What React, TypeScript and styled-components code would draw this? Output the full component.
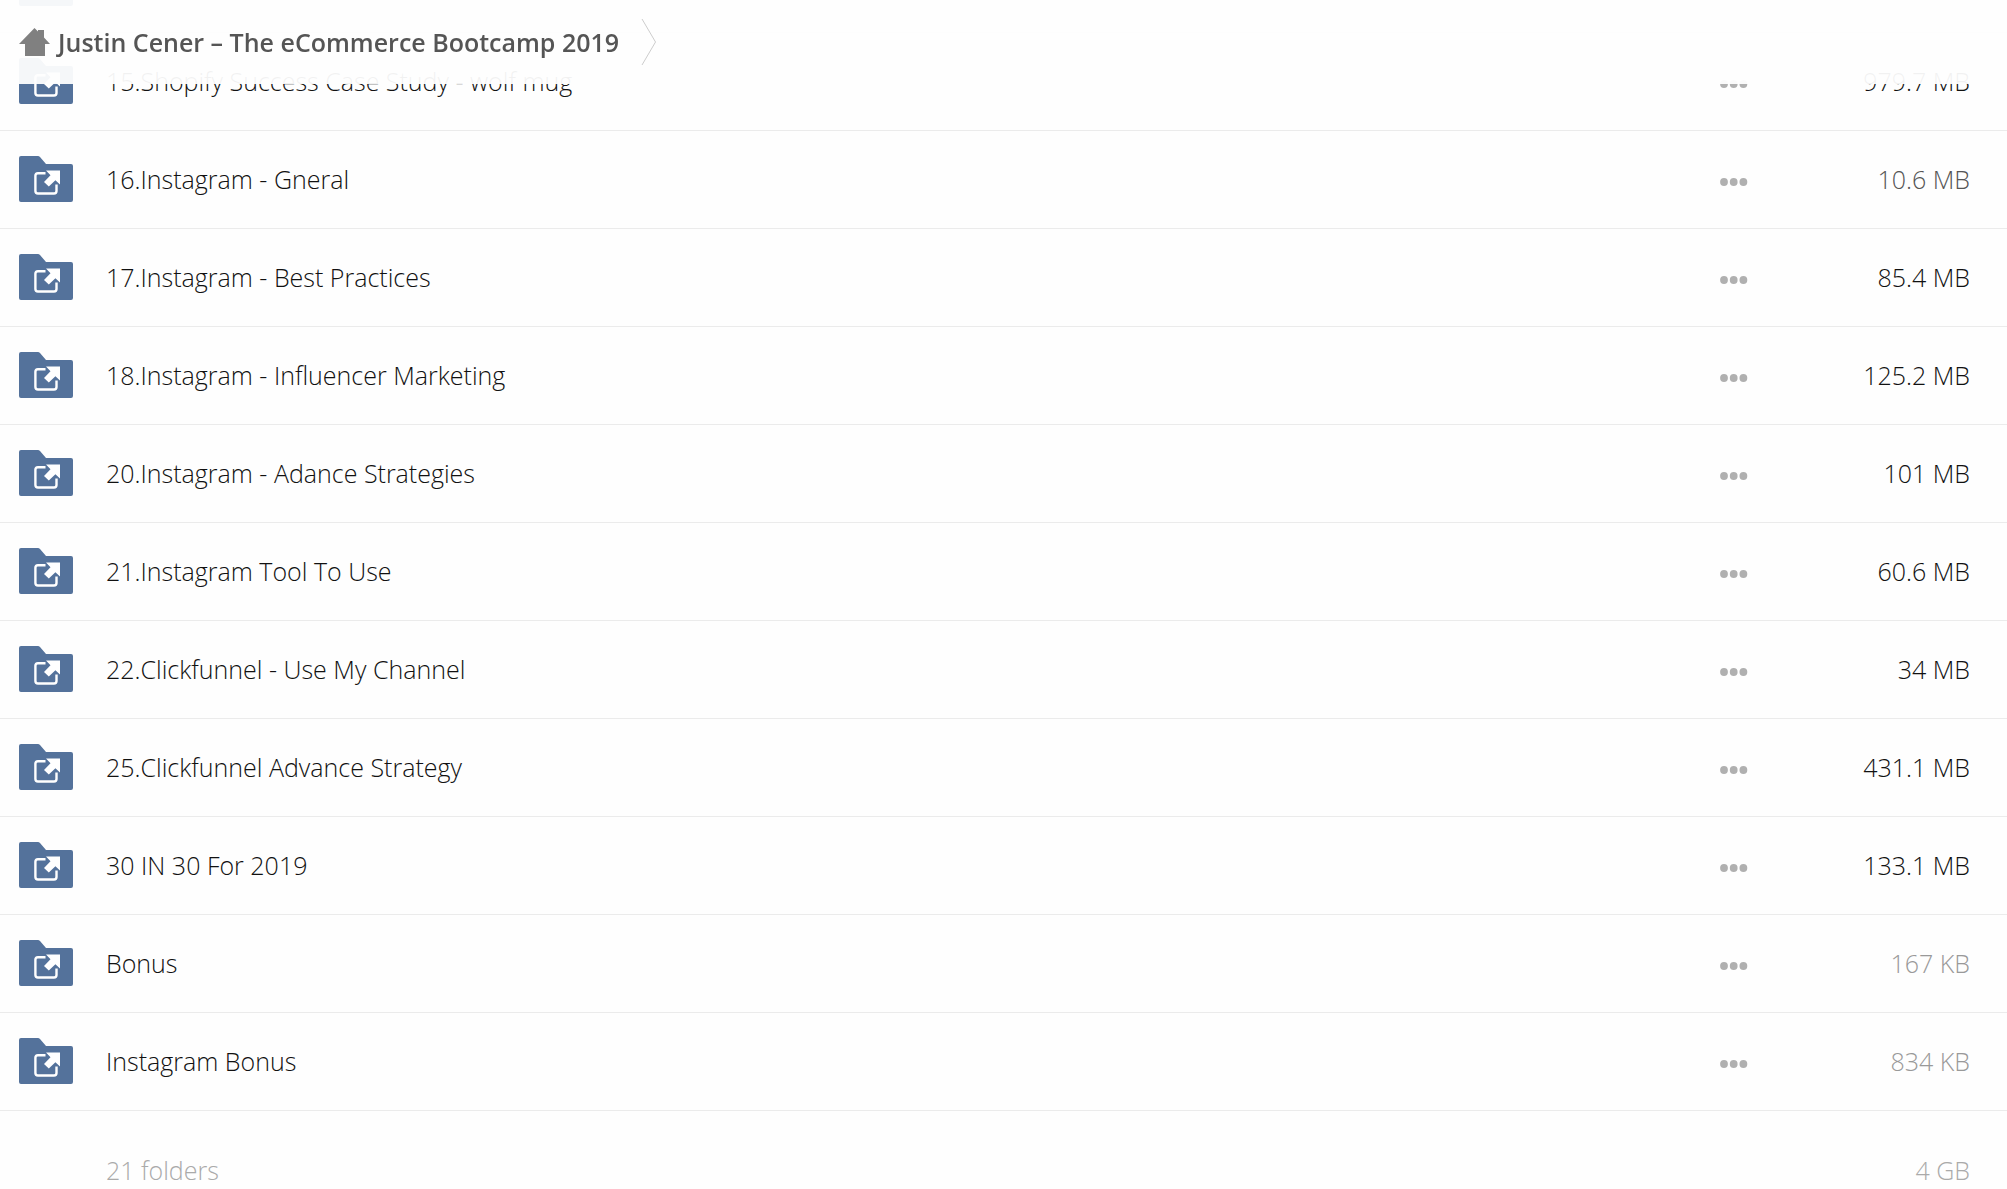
import React from "react";
import styled, { createGlobalStyle } from "styled-components";

const GlobalStyle = createGlobalStyle`
  html, body { margin: 0; background: #fefefe; }
  body { height: 100vh; overflow: hidden; font-family: "Open Sans", "Noto Sans", sans-serif; font-size: 25px; font-weight: 300; color: #111; }
  *, *::before, *::after { box-sizing: border-box; }
`;

const Header = styled.header`
  position: fixed;
  inset: 0 0 auto 0;
  z-index: 1;
  height: 84px;
  padding: 0 19px;
  display: flex;
  align-items: center;
  background: rgba(254, 254, 254, 0.95);
`;

const Crumb = styled.a`
  display: flex;
  align-items: center;
  gap: 8px;
  color: #555;
  font-weight: 600;
  line-height: 36px;
  text-decoration: none;
`;

const Chevron = styled.svg`
  display: block;
  margin-left: 22px;
`;

/* The list is shown scrolled, with its earlier rows above the window. */
const Scrolled = styled.main`
  margin-top: -66px;
`;

const FileTable = styled.table`
  width: 100%;
  border-collapse: collapse;
  table-layout: fixed;
`;

const Row = styled.tr`
  height: 98px;
  border-bottom: 1px solid #ebebeb;
`;

const Cell = styled.td<{ $tone?: string }>`
  padding: 0;
  line-height: 36px;
  white-space: nowrap;
  color: ${(p) => p.$tone ?? "inherit"};
`;

const IconCell = styled(Cell)`
  width: 106px;
  padding-left: 18px;
`;

const MenuCell = styled(Cell)`
  width: 80px;
`;

const SizeCell = styled(Cell)`
  width: 207px;
  padding-right: 37px;
  text-align: right;
`;

const FolderIcon = styled.svg`
  display: block;
`;

const NameLink = styled.a`
  color: inherit;
  text-decoration: none;
`;

const MenuButton = styled.button`
  display: flex;
  padding: 13px 0 8px;
  border: 0;
  background: none;
  cursor: pointer;
`;

const Summary = styled(Row)`
  height: 120px;
  border-bottom: 0;
`;

const tones = { dark: "#111", medium: "#555", light: "#999", faint: "#aaa" };

type Item = { name: string; size: string; tone: keyof typeof tones };

const items: Item[] = [
  { name: "", size: "", tone: "dark" },
  { name: "15.Shopify Success Case Study - wolf mug", size: "979.7 MB", tone: "dark" },
  { name: "16.Instagram - Gneral", size: "10.6 MB", tone: "medium" },
  { name: "17.Instagram - Best Practices", size: "85.4 MB", tone: "dark" },
  { name: "18.Instagram - Influencer Marketing", size: "125.2 MB", tone: "dark" },
  { name: "20.Instagram - Adance Strategies", size: "101 MB", tone: "dark" },
  { name: "21.Instagram Tool To Use", size: "60.6 MB", tone: "dark" },
  { name: "22.Clickfunnel - Use My Channel", size: "34 MB", tone: "dark" },
  { name: "25.Clickfunnel Advance Strategy", size: "431.1 MB", tone: "dark" },
  { name: "30 IN 30 For 2019", size: "133.1 MB", tone: "dark" },
  { name: "Bonus", size: "167 KB", tone: "light" },
  { name: "Instagram Bonus", size: "834 KB", tone: "light" },
];

function Folder() {
  return (
    <FolderIcon width="56" height="48" viewBox="0 0 56 48" aria-hidden="true">
      <path d="M3 1H20Q21 1 22 2L28 9H53Q55 9 55 11V45Q55 47 53 47H3Q1 47 1 45V3Q1 1 3 1Z" fill="#54729b" />
      <path d="M27.500 18.200H20Q17.400 18.200 17.400 20.800V36Q17.400 38.500 20 38.500H36Q38.500 38.500 38.500 36V29.500" fill="none" stroke="#fff" strokeWidth="2.400" />
      <path d="M28 15.500H42V29.500L37.400 25.200L30.800 31.600L26 27L32.500 20.200Z" fill="#fff" />
    </FolderIcon>
  );
}

function FileRow({ name, size, tone }: Item) {
  return (
    <Row>
      <IconCell><Folder /></IconCell>
      <Cell>{name && <NameLink href="#">{name}</NameLink>}</Cell>
      <MenuCell>
        {name && (
          <MenuButton type="button" aria-label="More">
            <svg width="28" height="8" viewBox="0 0 28 8" fill="#b0b0b0" aria-hidden="true">
              <circle cx="4" cy="4" r="3.900" />
              <circle cx="13.700" cy="4" r="3.900" />
              <circle cx="23.400" cy="4" r="3.900" />
            </svg>
          </MenuButton>
        )}
      </MenuCell>
      <SizeCell $tone={tones[tone]}>{size}</SizeCell>
    </Row>
  );
}

export default function App() {
  return (
    <>
      <GlobalStyle />
      <Header>
        <Crumb href="#">
          <svg width="31" height="28" viewBox="0 0 31 28" fill="#808080" aria-hidden="true">
            <path d="M15.500 0L19 3.500V2H25V9.500L31 16H26V28H6V16H0Z" />
          </svg>
          Justin Cener – The eCommerce Bootcamp 2019
        </Crumb>
        <Chevron width="16" height="48" viewBox="0 0 16 48" fill="none" stroke="#ccc" aria-hidden="true">
          <path d="M1 1L14.500 24L1 47" />
        </Chevron>
      </Header>
      <Scrolled>
        <FileTable>
          <tbody>
            {items.map((item, index) => <FileRow key={index} {...item} />)}
            <Summary>
              <IconCell />
              <Cell $tone={tones.faint}>21 folders</Cell>
              <MenuCell />
              <SizeCell $tone={tones.faint}>4 GB</SizeCell>
            </Summary>
          </tbody>
        </FileTable>
      </Scrolled>
    </>
  );
}
